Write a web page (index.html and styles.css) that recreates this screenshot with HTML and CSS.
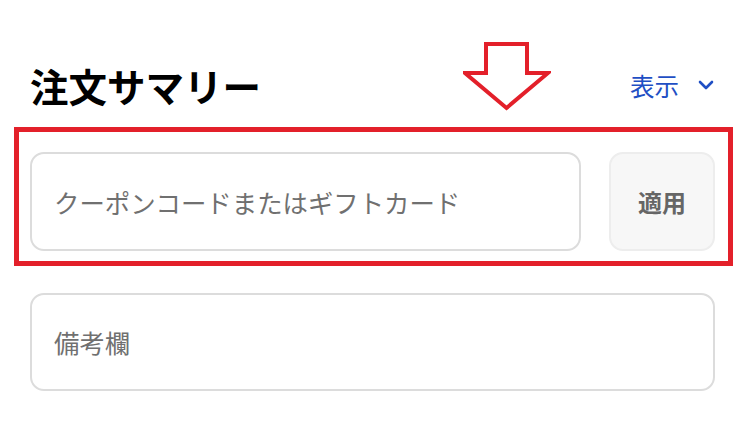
FILE: index.html
```html
<!DOCTYPE html>
<html>
<head>
  <title>注文サマリー</title>
  <meta name="viewport" content="width=device-width, initial-scale=1.0">
  <link rel="stylesheet" href="styles.css">
</head>
<body>
  <div class="summary">
    <div class="summary-head">
      <h2 class="summary-title">注文サマリー</h2>
      <button class="toggle">表示
        <svg class="chevron" viewBox="0 0 16 10" width="16" height="10"><path d="M2 2 L8 8 L14 2" fill="none" stroke="#1f4fc4" stroke-width="2.6" stroke-linecap="round" stroke-linejoin="round"/></svg>
      </button>
      <svg class="mark-arrow" viewBox="0 0 88 70" width="88" height="70"><polygon points="23,2 64,2 64,31 85,31 43.5,66 2,31 23,31" fill="none" stroke="#e3202a" stroke-width="4" stroke-linejoin="miter"/></svg>
    </div>
    <div class="coupon highlight">
      <input class="field coupon-field" type="text" placeholder="クーポンコードまたはギフトカード">
      <button class="apply">適用</button>
    </div>
    <input class="field notes" type="text" placeholder="備考欄">
  </div>
</body>
</html>
```

FILE: styles.css
```css
body {
  margin: 0;
  background: #fff;
  font-family: "Noto Sans CJK JP", "Noto Sans", sans-serif;
  color: #000;
}
.summary {
  padding: 60px 32px 0 30px;
}
.summary-head {
  position: relative;
  display: flex;
  align-items: center;
  justify-content: space-between;
  height: 50px;
}
.summary-title {
  margin: 0;
  font-size: 38.5px;
  font-weight: 700;
  line-height: 1;
}
.toggle {
  display: flex;
  align-items: center;
  gap: 19px;
  border: 0;
  background: none;
  padding: 0;
  margin-right: 1px;
  color: #1f4fc4;
  font-family: inherit;
  font-size: 24.5px;
  cursor: pointer;
}
.mark-arrow {
  position: absolute;
  left: 433px;
  top: -18px;
}
.coupon {
  display: flex;
  gap: 28px;
  margin-top: 42px;
}
.highlight {
  position: relative;
}
.highlight::after {
  content: "";
  position: absolute;
  top: -25px;
  left: -16px;
  right: -18px;
  bottom: -15px;
  border: 5px solid #e3202a;
  pointer-events: none;
}
.field {
  box-sizing: border-box;
  height: 99px;
  border: 2px solid #dcdcdc;
  border-radius: 14px;
  background: #fff;
  padding: 0 22px;
  font-family: inherit;
  font-size: 25.4px;
  color: #333;
  outline: none;
}
.field::placeholder {
  color: #707070;
}
.coupon-field {
  flex: 1;
  min-width: 0;
}
.apply {
  width: 106px;
  height: 99px;
  border: 2px solid #ededed;
  border-radius: 14px;
  background: #f7f7f7;
  color: #666;
  font-family: inherit;
  font-size: 24px;
  font-weight: 700;
  cursor: pointer;
}
.notes {
  display: block;
  width: 100%;
  height: 98px;
  margin-top: 42px;
}
```
